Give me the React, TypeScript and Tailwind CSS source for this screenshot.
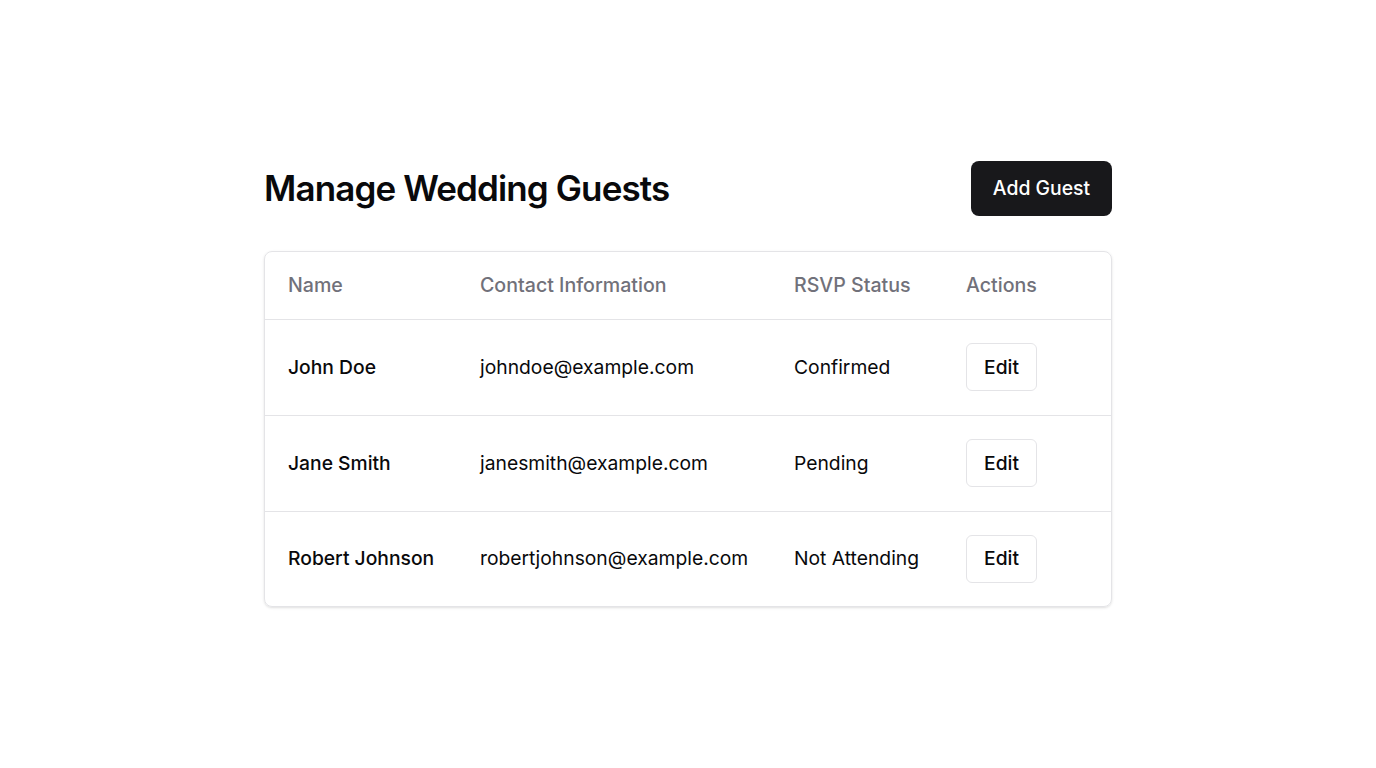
const guests = [
  { name: "John Doe", email: "johndoe@example.com", status: "Confirmed" },
  { name: "Jane Smith", email: "janesmith@example.com", status: "Pending" },
  { name: "Robert Johnson", email: "robertjohnson@example.com", status: "Not Attending" },
];

export default function App() {
  return (
    <div className="min-h-screen bg-white flex items-center justify-center font-['Inter',sans-serif] text-[#09090b]">
      <div className="w-full max-w-4xl px-6">
        <div className="flex items-center justify-between mb-[35px]">
          <h1 className="text-[35px] font-semibold tracking-tight">Manage Wedding Guests</h1>
          <button className="h-[55px] w-[141px] rounded-lg bg-[#18181b] text-white text-[19.4px] font-medium">
            Add Guest
          </button>
        </div>

        <div className="rounded-lg border border-[#e4e4e7] shadow-sm overflow-hidden">
          <table className="w-full table-fixed text-[19.3px]">
            <colgroup>
              <col className="w-[192px]" />
              <col className="w-[314px]" />
              <col className="w-[172px]" />
              <col />
            </colgroup>
            <thead>
              <tr className="border-b border-[#e4e4e7] h-[67px]">
                <th className="pl-[23px] pr-6 text-left font-medium text-[19.6px] text-[#71717a]">Name</th>
                <th className="pl-[23px] pr-6 text-left font-medium text-[19.6px] text-[#71717a]">Contact Information</th>
                <th className="pl-[23px] pr-6 text-left font-medium text-[19.6px] text-[#71717a]">RSVP Status</th>
                <th className="pl-[23px] pr-6 text-left font-medium text-[19.6px] text-[#71717a]">Actions</th>
              </tr>
            </thead>
            <tbody>
              {guests.map((g, i) => (
                <tr
                  key={g.email}
                  className={i < guests.length - 1 ? "h-[96px] border-b border-[#e4e4e7]" : "h-[95px]"}
                >
                  <td className="pl-[23px] pr-6 font-medium whitespace-nowrap">{g.name}</td>
                  <td className="pl-[23px] pr-6 whitespace-nowrap">{g.email}</td>
                  <td className="pl-[23px] pr-6 whitespace-nowrap">{g.status}</td>
                  <td className="pl-[23px] pr-6">
                    <button className="h-12 w-[71px] rounded-md border border-[#e4e4e7] bg-white text-[19.3px] font-medium">
                      Edit
                    </button>
                  </td>
                </tr>
              ))}
            </tbody>
          </table>
        </div>
      </div>
    </div>
  );
}
